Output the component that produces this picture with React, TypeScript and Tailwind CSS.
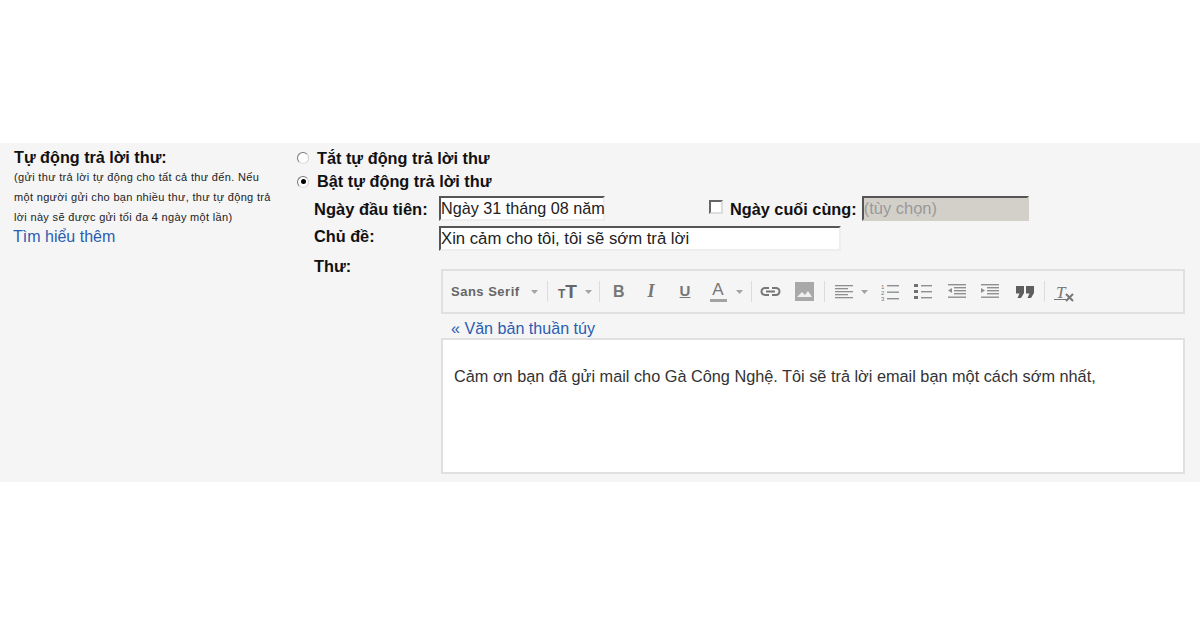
import type { ReactNode } from 'react'

const font = "font-['Liberation_Sans',Arial,sans-serif]"

function Caret({ className = '' }: { className?: string }) {
  return (
    <svg width="7" height="4" viewBox="0 0 7 4" className={className}>
      <path d="M0 0h7L3.5 4z" fill="#a3a3a3" />
    </svg>
  )
}

function Sep({ className = '' }: { className?: string }) {
  return <div className={`h-[21px] w-px shrink-0 bg-[#dcdcdc] ${className}`} />
}

function Icon({ children, left }: { children: ReactNode; left: string }) {
  return <div className={`flex shrink-0 items-center ${left}`}>{children}</div>
}

function Lines({ rows }: { rows: [number, number, number][] }) {
  return (
    <svg width="18" height="17" viewBox="0 0 18 17">
      {rows.map(([x, y, w], i) => (
        <rect key={i} x={x} y={y} width={w} height="1.3" fill="#8f8f8f" />
      ))}
    </svg>
  )
}

function Toolbar() {
  return (
    <div className="flex h-[45px] items-center border-2 border-[#e0e0e0] bg-[#f5f5f5] pl-[8px]">
      <span className="w-[71px] shrink-0 text-[13px] font-bold tracking-[0.5px] whitespace-nowrap text-[#666]">Sans Serif</span>
      <Caret className="ml-[9px] shrink-0" />
      <Sep className="ml-[9px]" />
      <span className="ml-[10px] flex w-[20px] shrink-0 items-baseline font-bold text-[#666]">
        <span className="text-[12px] leading-none">T</span>
        <span className="text-[19px] leading-none">T</span>
      </span>
      <Caret className="ml-[7px] shrink-0" />
      <Sep className="ml-[7px]" />
      <span className="ml-[13px] w-[10px] shrink-0 text-[16px] font-bold text-[#777]">B</span>
      <span className="ml-[20px] w-[16px] shrink-0 text-center font-['Liberation_Serif',serif] text-[18px] font-bold italic text-[#777]">I</span>
      <span className="ml-[19px] w-[14px] shrink-0 text-center text-[15px] font-bold text-[#777] underline">U</span>
      <span className="ml-[17px] flex w-[18px] shrink-0 flex-col items-center text-[17px] leading-[16px] text-[#777]">
        A
        <span className="mt-[1px] h-[3px] w-[17px] bg-[#a3a3a3]" />
      </span>
      <Caret className="ml-[9px] shrink-0" />
      <Sep className="ml-[8px]" />
      <Icon left="ml-[7px]">
        <svg width="23" height="11" viewBox="0 0 23 11" fill="none" stroke="#777" strokeWidth="2">
          <path d="M10 2H6a3.500 3.500 0 0 0 0 7h4M13 2h4a3.500 3.500 0 0 1 0 7h-4M7 5.500h9" />
        </svg>
      </Icon>
      <Icon left="ml-[13px]">
        <svg width="19" height="19" viewBox="0 0 19 19">
          <rect width="19" height="19" fill="#a9a9a9" />
          <path d="M2 15l5-5 3 3 3-4 4 6z" fill="#f0f0f0" />
        </svg>
      </Icon>
      <Sep className="ml-[10px]" />
      <Icon left="ml-[10px]">
        <Lines rows={[[0, 2, 18], [0, 5, 13], [0, 8, 18], [0, 11, 13], [0, 14, 18]]} />
      </Icon>
      <Caret className="ml-[8px] shrink-0" />
      <Icon left="ml-[13px]">
        <svg width="18" height="18" viewBox="0 0 18 18">
          <rect x="6" y="2" width="12" height="1.400" fill="#8f8f8f" />
          <rect x="6" y="8.500" width="12" height="1.400" fill="#8f8f8f" />
          <rect x="6" y="15" width="12" height="1.400" fill="#8f8f8f" />
          <text x="0" y="5.500" fontSize="6" fill="#777">1</text>
          <text x="0" y="11.500" fontSize="6" fill="#777">2</text>
          <text x="0" y="17.500" fontSize="6" fill="#777">3</text>
        </svg>
      </Icon>
      <Icon left="ml-[15px]">
        <svg width="18" height="17" viewBox="0 0 18 17" fill="#707070">
          <rect x="0" y="1" width="4" height="3" />
          <rect x="0" y="7" width="4" height="3" />
          <rect x="0" y="13" width="4" height="3" />
          <rect x="7" y="2" width="11" height="1.400" fill="#8f8f8f" />
          <rect x="7" y="8" width="11" height="1.400" fill="#8f8f8f" />
          <rect x="7" y="14" width="11" height="1.400" fill="#8f8f8f" />
        </svg>
      </Icon>
      <Icon left="ml-[16px]">
        <svg width="18" height="17" viewBox="0 0 18 17">
          <rect x="0" y="1" width="18" height="1.400" fill="#8f8f8f" />
          <rect x="6" y="4" width="12" height="1.400" fill="#8f8f8f" />
          <rect x="6" y="7" width="12" height="1.400" fill="#8f8f8f" />
          <rect x="6" y="10" width="12" height="1.400" fill="#8f8f8f" />
          <rect x="0" y="13.500" width="18" height="1.400" fill="#8f8f8f" />
          <path d="M4 5v5L0 7.500z" fill="#8f8f8f" />
        </svg>
      </Icon>
      <Icon left="ml-[15px]">
        <svg width="18" height="17" viewBox="0 0 18 17">
          <rect x="0" y="1" width="18" height="1.400" fill="#8f8f8f" />
          <rect x="6" y="4" width="12" height="1.400" fill="#8f8f8f" />
          <rect x="6" y="7" width="12" height="1.400" fill="#8f8f8f" />
          <rect x="6" y="10" width="12" height="1.400" fill="#8f8f8f" />
          <rect x="0" y="13.500" width="18" height="1.400" fill="#8f8f8f" />
          <path d="M0 5v5l4-2.500z" fill="#8f8f8f" />
        </svg>
      </Icon>
      <Icon left="ml-[17px]">
        <svg width="18" height="12" viewBox="0 0 18 12" fill="#5f5f5f">
          <path d="M0 0h8v7l-3 5H1.500l2-4.500H0zM10 0h8v7l-3 5h-3.500l2-4.500H10z" />
        </svg>
      </Icon>
      <Sep className="ml-[10px]" />
      <div className="relative ml-[9px] h-[20px] w-[20px] shrink-0">
        <span className="absolute left-[2px] top-[-2px] font-['Liberation_Serif',serif] text-[17px] italic text-[#777]">T</span>
        <span className="absolute bottom-[2px] left-0 h-px w-[12px] bg-[#777]" />
        <svg className="absolute bottom-0 right-0" width="9" height="9" viewBox="0 0 9 9" stroke="#777" strokeWidth="2">
          <path d="M1 1l7 7M8 1L1 8" />
        </svg>
      </div>
    </div>
  )
}

function Radio({ checked }: { checked?: boolean }) {
  return (
    <span className="flex h-[12px] w-[12px] shrink-0 items-center justify-center rounded-full border border-t-[#777] border-r-[#ccc] border-b-[#ddd] border-l-[#777] bg-white">
      {checked ? <span className="h-[5px] w-[5px] rounded-full bg-black" /> : null}
    </span>
  )
}

export default function App() {
  return (
    <div className={`${font} h-[625px] w-[1200px] overflow-hidden bg-white pt-[143px]`}>
      <div className="flex h-[339px] bg-[#f5f5f6]">
        <div className="w-[283px] shrink-0 pl-[14px] pt-[5px]">
          <div className="text-[16.200px] leading-[18px] font-bold text-[#111]">Tự động trả lời thư:</div>
          <p className="mt-[1px] w-[262px] text-[11px] leading-[20px] tracking-[0.33px] text-[#222]">
            (gửi thư trả lời tự động cho tất cả thư đến. Nếu một người gửi cho bạn nhiều thư, thư tự động trả lời này sẽ được gửi tối đa 4 ngày một lần)
          </p>
          <a className="-ml-px mt-px block text-[16px] leading-[18px] text-[#2a5db0]">Tìm hiểu thêm</a>
        </div>
        <div className="min-w-0 flex-1 pl-[14px]">
          <div className="flex h-[24px] items-center gap-[8px] pt-[6px] text-[16.300px] font-bold text-[#111]">
            <Radio />
            Tắt tự động trả lời thư
          </div>
          <div className="flex h-[23px] items-center gap-[8px] pt-[6px] text-[16.300px] font-bold text-[#111]">
            <Radio checked />
            Bật tự động trả lời thư
          </div>
          <div className="mt-[6px] flex items-start">
            <span className="ml-[17px] w-[125px] pt-[4px] text-[16.500px] leading-[18px] font-bold whitespace-nowrap text-[#111]">Ngày đầu tiên:</span>
            <div className="flex h-[25px] w-[166px] items-center border-2 border-t-[#555] border-r-[#eee] border-b-[#eee] border-l-[#555] bg-white text-[16.200px] whitespace-nowrap text-[#222]">
              Ngày 31 tháng 08 năm
            </div>
            <span className="ml-[104px] mt-[4px] h-[14px] w-[14px] border-2 border-t-[#666] border-r-[#ddd] border-b-[#ddd] border-l-[#666] bg-white" />
            <span className="ml-[7px] pt-[4px] text-[16.300px] leading-[18px] font-bold whitespace-nowrap text-[#111]">Ngày cuối cùng:</span>
            <div className="ml-[5px] flex h-[25px] w-[167px] items-center border-2 border-t-[#555] border-r-[#d3d0ca] border-b-[#d3d0ca] border-l-[#555] bg-[#d3d0ca] text-[16.500px] text-[#999]">
              (tùy chọn)
            </div>
          </div>
          <div className="mt-[5px] flex items-start">
            <span className="ml-[17px] w-[125px] pt-[1px] text-[16.300px] leading-[18px] font-bold text-[#111]">Chủ đề:</span>
            <div className="flex h-[25px] w-[402px] items-center border-2 border-t-[#555] border-r-[#eee] border-b-[#eee] border-l-[#555] bg-white text-[16.700px] whitespace-nowrap text-[#222]">
              Xin cảm cho tôi, tôi sẽ sớm trả lời
            </div>
          </div>
          <div className="flex h-[18px] items-start">
            <span className="ml-[17px] mt-[6px] text-[16.300px] leading-[18px] font-bold text-[#111]">Thư:</span>
          </div>
          <div className="ml-[144px] mr-[15px]">
            <Toolbar />
            <a className="mt-[5px] ml-[10px] block text-[16.100px] leading-[18px] text-[#2a5db0]">« Văn bản thuần túy</a>
            <div className="mt-px h-[136px] border-2 border-[#e0e0e0] bg-white pl-[11px] pt-[26px] text-[16.300px] leading-[20px] whitespace-nowrap text-[#333]">
              Cảm ơn bạn đã gửi mail cho Gà Công Nghệ. Tôi sẽ trả lời email bạn một cách sớm nhất,
            </div>
          </div>
        </div>
      </div>
    </div>
  )
}
